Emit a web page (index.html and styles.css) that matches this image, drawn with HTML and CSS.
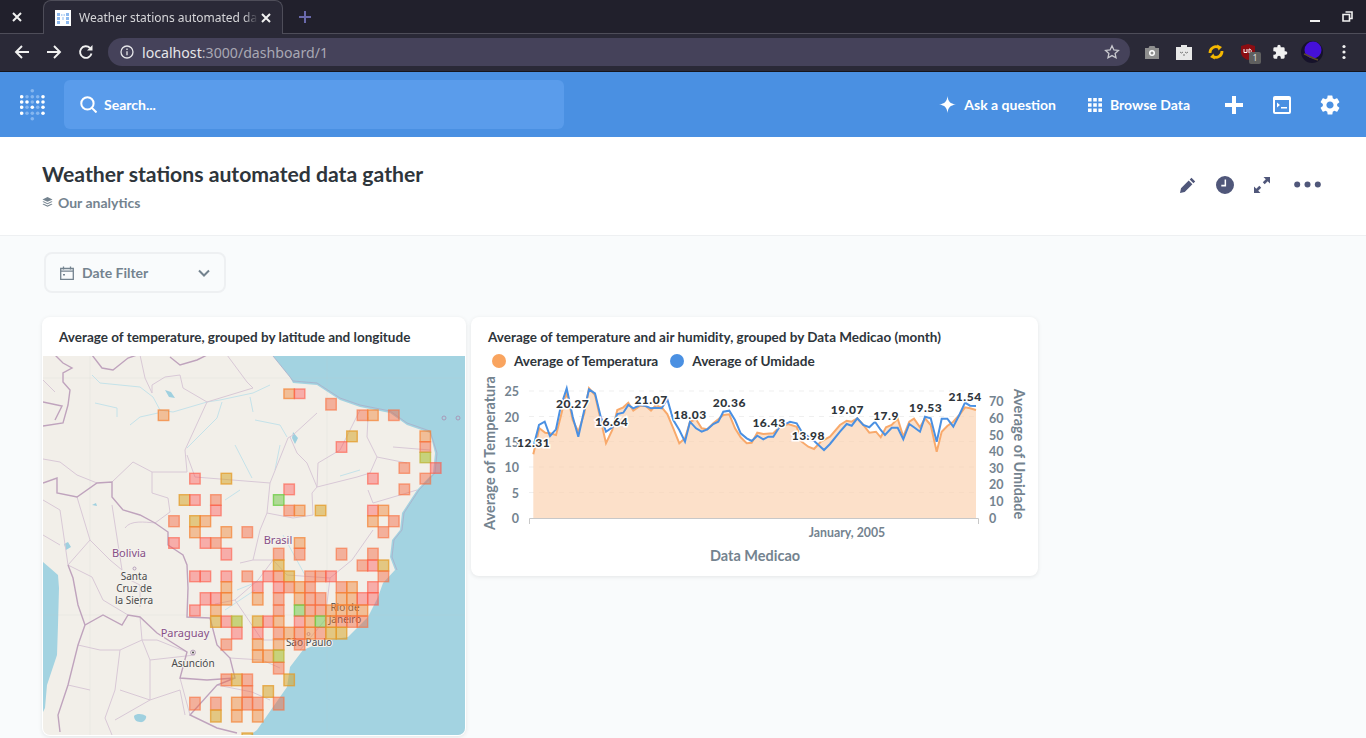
FILE: index.html
```html
<!DOCTYPE html>
<html lang="en">
<head>
    <meta charset="UTF-8">
    <meta name="viewport" content="width=device-width, initial-scale=1.0">
    <title>Weather stations automated data gather</title>
    <link rel="stylesheet" href="styles.css">
</head>
<body>

<!-- browser chrome -->
<div class="tab-strip">
    <svg class="tab-x first" viewBox="0 0 12 12"><path d="M2 2l8 8M10 2l-8 8"/></svg>
    <div class="tab">
        <svg class="favicon" viewBox="0 0 16 16">
            <rect width="16" height="16" fill="#fff"/>
            <path d="M2 3h3v3H2zM2 7h3v3H2zM2 11h3v3H2zM11 3h3v3h-3zM11 7h3v3h-3zM11 11h3v3h-3z" fill="#8db9ee"/>
            <path d="M6 4h1.5v2H6zM8.5 4H10v2H8.5zM7.2 7h1.6v3H7.2z" fill="#b9d4f4"/>
        </svg>
        <span class="tab-title">Weather stations automated da</span>
        <svg class="tab-x" viewBox="0 0 12 12"><path d="M2 2l8 8M10 2l-8 8"/></svg>
    </div>
    <svg class="new-tab" viewBox="0 0 12 12"><path d="M6 0v12M0 6h12"/></svg>
    <div class="window-btns">
        <span class="win-min"></span>
        <svg class="win-restore" viewBox="0 0 11 11"><path d="M3.500 1h6.500v6.500H8M1 3.500h6.500V10H1z"/></svg>
    </div>
</div>

<div class="toolbar">
    <svg class="tool-btn" viewBox="0 0 16 16"><path d="M15 8H2M8 2L2 8l6 6"/></svg>
    <svg class="tool-btn" viewBox="0 0 16 16"><path d="M1 8h13M8 2l6 6-6 6"/></svg>
    <svg class="tool-btn" viewBox="0 0 16 16"><path d="M13.500 9.500A5.800 5.800 0 1 1 12 4"/><path class="solid" d="M14.500 1v5.500H9z"/></svg>
    <div class="url-bar">
        <svg class="url-info" viewBox="0 0 14 14"><circle cx="7" cy="7" r="6"/><path d="M7 6.200v4M7 3.500v1.400"/></svg>
        <span class="url-text">localhost<span class="url-dim">:3000/dashboard/1</span></span>
        <svg class="url-star" viewBox="0 0 16 16"><path d="M8 1.800l1.900 4.100 4.500.5-3.300 3 .9 4.400L8 11.600l-4 2.200.9-4.400-3.300-3 4.500-.5z"/></svg>
    </div>
    <div class="extensions">
        <svg class="ext" viewBox="0 0 16 16"><path fill="#8e8e8e" d="M1 4h3.500l1-2h5l1 2H15v11H1z"/><circle cx="8" cy="9" r="3" fill="#fff"/><circle cx="8" cy="9" r="1.500" fill="#8e8e8e"/></svg>
        <svg class="ext" viewBox="0 0 16 16"><path fill="#e8e8e8" d="M0 3h5V1h6v2h5v13H0z"/><path d="M4 8l1.500 1L7 8M9 8l1.500 1L12 8M7 11h2" stroke="#777" fill="none"/></svg>
        <svg class="ext" viewBox="0 0 16 16"><g fill="none" stroke="#f5b800" stroke-width="2.800"><path d="M2 9a6 6 0 0 1 9-5.500"/><path d="M14 7a6 6 0 0 1-9 5.500"/></g><path fill="#f5b800" d="M9 .5l5 2.500-3.500 3.500zM7 15.500L2 13l3.500-3.500z"/></svg>
        <div class="ublock">
            <svg class="ext" viewBox="0 0 16 16"><path fill="#8b0d12" d="M8 0l7 2v6c0 4-3 6.500-7 8-4-1.500-7-4-7-8V2z"/><path d="M4 5v3.500h3V5M9 5v4M9 5c3 0 3 4 0 4" fill="none" stroke="#fff"/></svg>
            <span class="ext-badge">1</span>
        </div>
        <svg class="ext" viewBox="0 0 24 24"><path fill="#f1f1f1" d="M20.500 11H19V7a2 2 0 0 0-2-2h-4V3.500a2.500 2.500 0 0 0-5 0V5H4a2 2 0 0 0-2 2v3.800h1.500a2.700 2.700 0 0 1 0 5.400H2V20a2 2 0 0 0 2 2h3.800v-1.500a2.700 2.700 0 0 1 5.400 0V22H17a2 2 0 0 0 2-2v-4h1.500a2.500 2.500 0 0 0 0-5z"/></svg>
        <svg class="ext avatar" viewBox="0 0 22 22"><circle cx="11" cy="11" r="11" fill="#16122a"/><circle cx="12" cy="9" r="8.500" fill="#4510d8"/><path d="M3 13c4 1 7 4 14 6" stroke="#5c4a2a" stroke-width="1.500" fill="none"/></svg>
        <svg class="ext dots" viewBox="0 0 4 16"><circle cx="2" cy="2.500" r="1.600"/><circle cx="2" cy="8" r="1.600"/><circle cx="2" cy="13.500" r="1.600"/></svg>
    </div>
</div>

<!-- app nav -->
<nav class="navbar">
    <svg class="logo" viewBox="20 88 25 33">
        <g fill="#fff">
            <circle cx="21.700" cy="96.700" r="1.800"/><circle cx="21.700" cy="102" r="1.800"/><circle cx="21.700" cy="107.300" r="1.800"/><circle cx="21.700" cy="113.300" r="1.800"/>
            <circle cx="43" cy="96.700" r="1.800"/><circle cx="43" cy="102" r="1.800"/><circle cx="43" cy="107.300" r="1.800"/><circle cx="43" cy="113.300" r="1.800"/>
            <circle cx="27" cy="102" r="1.800"/><circle cx="37.700" cy="102" r="1.800"/><circle cx="32.300" cy="107.300" r="1.800"/>
        </g>
        <g fill="#85b6ef">
            <circle cx="32.300" cy="90.700" r="1.800"/><circle cx="32.300" cy="96.700" r="1.800"/><circle cx="32.300" cy="102" r="1.800"/><circle cx="32.300" cy="113.300" r="1.800"/><circle cx="32.300" cy="118.700" r="1.800"/>
            <circle cx="27" cy="96.700" r="1.800"/><circle cx="37.700" cy="96.700" r="1.800"/><circle cx="27" cy="107.300" r="1.800"/><circle cx="37.700" cy="107.300" r="1.800"/><circle cx="27" cy="113.300" r="1.800"/><circle cx="37.700" cy="113.300" r="1.800"/>
        </g>
    </svg>
    <div class="search-box">
        <svg class="search-icon" viewBox="0 0 16 16"><circle cx="7" cy="7" r="5.800"/><path d="M11.200 11.200L15.500 15.500"/></svg>
        <span>Search...</span>
    </div>
    <div class="nav-links">
        <a class="nav-link">
            <svg class="nav-small" viewBox="0 0 16 16"><path d="M8 0c.5 5 2.500 7.300 8 8-5.500.7-7.500 3-8 8-.5-5-2.500-7.300-8-8 5.500-.7 7.500-3 8-8z"/></svg>
            Ask a question
        </a>
        <a class="nav-link">
            <svg class="nav-small grid-icon" viewBox="0 0 14 14"><path d="M0 0h3.600v3.600H0zM5.200 0h3.600v3.600H5.200zM10.400 0H14v3.600h-3.600zM0 5.200h3.600v3.600H0zM5.200 5.200h3.600v3.600H5.200zM10.400 5.200H14v3.600h-3.600zM0 10.400h3.600V14H0zM5.200 10.400h3.600V14H5.200zM10.400 10.400H14V14h-3.600z"/></svg>
            Browse Data
        </a>
        <div class="nav-icons">
            <svg class="nav-icon" viewBox="0 0 18 18"><path d="M7 0h4v7h7v4h-7v7H7v-7H0V7h7z"/></svg>
            <svg class="nav-icon" viewBox="0 0 18 18"><path fill-rule="evenodd" d="M2 0h14a2 2 0 0 1 2 2v14a2 2 0 0 1-2 2H2a2 2 0 0 1-2-2V2a2 2 0 0 1 2-2zm0 4v12h14V4zM4 6.500l3 2.500-3 2.500zM8 11h6v1.500H8z"/></svg>
            <svg class="nav-icon gear" viewBox="0 0 24 24"><path fill-rule="evenodd" d="M19.140 12.940c.04-.3.06-.61.06-.94 0-.32-.02-.64-.07-.94l2.030-1.580a.49.49 0 0 0 .12-.61l-1.920-3.320a.488.488 0 0 0-.59-.22l-2.390.96c-.5-.38-1.030-.7-1.620-.94l-.36-2.540a.484.484 0 0 0-.48-.41h-3.840c-.24 0-.43.17-.47.41l-.36 2.540c-.59.24-1.130.57-1.620.94l-2.390-.96c-.22-.08-.47 0-.59.22L2.740 8.870c-.12.21-.08.47.12.61l2.030 1.580c-.05.3-.09.63-.09.94s.02.64.07.94l-2.030 1.580a.49.49 0 0 0-.12.61l1.920 3.320c.12.22.37.29.59.22l2.390-.96c.5.38 1.030.7 1.620.94l.36 2.540c.05.24.24.41.48.41h3.840c.24 0 .44-.17.47-.41l.36-2.540c.59-.24 1.130-.56 1.620-.94l2.390.96c.22.08.47 0 .59-.22l1.920-3.320c.12-.22.07-.47-.12-.61l-2.010-1.580zM12 15.600c-1.980 0-3.600-1.620-3.600-3.600s1.620-3.600 3.600-3.600 3.600 1.620 3.600 3.600-1.620 3.600-3.600 3.600z"/></svg>
        </div>
    </div>
</nav>

<!-- dashboard header -->
<header class="dash-header">
    <div>
        <h1 class="dash-title">Weather stations automated data gather</h1>
        <div class="dash-collection">
            <svg class="stack-icon" viewBox="0 0 12 12"><path d="M6 0l5.500 2.600L6 5.200.5 2.600zM1.800 4.700L6 6.700l4.200-2 1.300.6L6 7.900.5 5.300zM1.800 7.300L6 9.300l4.200-2 1.300.7L6 10.600.5 8z"/></svg>
            Our analytics
        </div>
    </div>
    <div class="dash-actions">
        <svg class="action-icon" viewBox="0 0 16 16"><path d="M11.500.800l3.700 3.700-1.800 1.800-3.700-3.700zM8.700 3.600l3.700 3.700-7.700 7.700-4.700 1 1-4.700z"/></svg>
        <svg class="action-icon clock" viewBox="0 0 18 18"><path fill-rule="evenodd" d="M9 0a9 9 0 1 1 0 18A9 9 0 0 1 9 0zm1.100 3.500H8.600v5.300H5.300v1.600h4.800z"/></svg>
        <svg class="action-icon expand" viewBox="0 0 16 16"><path d="M9.500 0H16v6.500l-2.300-2.300-3 3-1.900-1.900 3-3zM6.500 16H0V9.500l2.300 2.300 3-3 1.900 1.900-3 3z"/></svg>
        <svg class="action-icon more" viewBox="0 0 27 7"><circle cx="3.200" cy="3.500" r="3"/><circle cx="13.500" cy="3.500" r="3"/><circle cx="23.800" cy="3.500" r="3"/></svg>
    </div>
</header>

<main class="dash-body">
    <div class="date-filter">
        <svg class="cal-icon" viewBox="0 0 14 14"><path d="M.7 2.500h12.600v10.800H.7zM.7 5.200h12.600"/><path d="M3.500.5v3M10.500.5v3"/><path class="solid" d="M3 8h2v1.600H3z"/></svg>
        <span class="filter-label">Date Filter</span>
        <svg class="chev-icon" viewBox="0 0 12 8"><path d="M1 1.500l5 5 5-5"/></svg>
    </div>

    <div class="cards">
        <section class="card card-map">
            <h2 class="card-title">Average of temperature, grouped by latitude and longitude</h2>
            <svg class="map" viewBox="43 356 422 379">
                <rect x="43" y="356" width="422" height="379" class="land"/>
                <path class="sea" d="M273 356L290 377 293 383 317 385 340 400 360 407 390 413 407 425 430 433 435 453 433 473 417 490 402 513 400 530 392 540 390 557 395 570 383 583 378 597 368 617 348 637 327 640 303 650 290 667 287 687 273 707 257 730 250 735H465V356z"/>
                <path class="sea" d="M43 562L50 568 58 575 59 588 58 625 57 655 47 685 45 708 43 712z"/>
                <path class="coast" d="M273 356L290 377 293 381 317 383 340 398 360 405 390 411 407 423 430 431 437 453 435 473 419 490 404 513 402 530 394 540 392 557 397 570"/>
                <path class="seam" d="M90 356V735M43 378H465M327 356V735M43 615H465"/>
                <path class="river" d="M92 375L100 383 140 387 153 397 160 410 173 412 207 402 220 400 253 393 270 385M130 425L140 417 158 413M95 403L117 408 117 417M222 402L217 418 187 448M250 397L253 412M255 420L280 425 287 437M235 445L252 478M280 445L275 470M225 500L240 490M283 535L305 575M237 590L262 580M225 610L255 590M340 476L360 470"/>
                <path class="lake" d="M165 390l6 2 4 6-6-1zM64 544l4-2 3 5-5 3zM134 716c3-3 9-2 12 0 1 3-3 7-6 6-4 0-6-3-6-6zM92 505l4-2 1 3zM293 432l5 6-3 6-3-6z"/>
                <path class="state" d="M140 355L145 378 152 393 152 385 165 377 180 375 183 388 207 402M227 355L247 382 253 388 207 402M207 402L185 450 187 472 152 472 133 462 112 482M43 459L60 462 77 475 97 483M152 472L152 493 168 498 170 512 155 523M187 455L195 477 270 483 288 438 293 435 317 413M270 483L267 513 293 518 313 515 312 493 317 487 307 463 297 453 290 437M317 487L318 463 340 450 360 410M368 417L367 437 377 457 407 463M377 457L370 473 357 477 333 483 317 487M393 447L430 450M368 490L373 503 417 490M240 563L253 560 273 560 287 575 330 578 352 560 373 530M273 560L258 580 235 600 215 604M330 578L325 620 300 650M253 560L260 530 267 513M235 600L262 640 300 640M230 658L262 660 280 668M217 685L252 692 270 700M120 575L140 585 140 607M68 565L92 577 103 600 128 615M140 617L142 640 120 650 100 650 78 645M142 640L157 640 187 652M142 640L150 660 195 655M120 650L115 690 105 718 112 735M150 660L150 700 120 690M150 700L115 720M43 500L60 510 68 565 90 540 110 560 122 570 112 505M90 540L77 497M180 678L190 715M125 528C130 520 145 522 155 523M43 535L60 545M150 700L180 690 185 715M90 690L68 685M43 380L55 392"/>
                <path class="border" d="M55 355L63 363 72 368 63 373 63 382 70 390 68 405 63 423 43 426M43 402L62 406 55 420M92 355L102 368 113 370 128 358 137 355M170 357L180 365 197 360 207 355M43 483L57 478 57 493 77 497 97 483 112 482 112 497 123 510 140 515 155 523 168 532 168 545 183 555 187 565 188 588 187 617 210 618 217 645 230 658 235 678 217 685 190 715 217 728 237 733M68 565L73 578 78 605 85 625 103 615 122 625 128 615 140 617 157 633 187 652 180 678 207 680 235 678M85 625L78 645 68 685 58 715 60 732"/>
                <circle class="island" cx="444" cy="418" r="2"/>
                <circle class="island" cx="458" cy="418" r="2"/>
                <text class="place country" x="129" y="557">Bolivia</text>
                <circle class="island" cx="134.500" cy="568.500" r="1.500"/>
                <text class="place" x="134" y="580">Santa</text>
                <text class="place" x="134" y="592">Cruz de</text>
                <text class="place" x="134" y="604">la Sierra</text>
                <text class="place country" x="185" y="637">Paraguay</text>
                <circle class="island" cx="193" cy="652.500" r="2.400"/>
                <circle class="city-dot" cx="193" cy="652.500" r="1"/>
                <text class="place" x="193" y="667">Asunción</text>
                <text class="place country" x="278" y="544">Brasil</text>
                <text class="place" x="345" y="611">Rio de</text>
                <text class="place" x="345" y="623">Janeiro</text>
                <circle class="island" cx="308.500" cy="634" r="1.500"/>
                <text class="place" x="309" y="646">São Paulo</text>
                <g id="cells"></g>
            </svg>
        </section>

        <section class="card card-chart">
            <h2 class="card-title">Average of temperature and air humidity, grouped by Data Medicao (month)</h2>
            <div class="legend">
                <span class="legend-item"><i class="legend-dot dot-temp"></i>Average of Temperatura</span>
                <span class="legend-item"><i class="legend-dot dot-hum"></i>Average of Umidade</span>
            </div>
            <svg class="chart" viewBox="471 372 567 204">
                <path class="grid-line" d="M529 391H979M529 416.500H979M529 441.500H979M529 467H979M529 492.500H979"/>
                <polygon class="area" points="533.300,518 533.300,454.300 539.300,428.300 545.300,432.700 550,433.300 556,435 560.700,416.700 566.700,391.700 572.700,420 578.300,431.700 584.300,413.300 589,388.300 595,395 600.700,420 606,443.300 612.300,430 617.300,410 623.300,407.300 628.300,402.700 633.300,410.700 640,406 645.700,406 651,410.700 656,405 661.700,407.300 667.300,414 673.300,428.300 679.300,443.300 685,438.300 690,421.700 696,419.300 701.700,428.300 707.300,429.300 713.300,423.300 718.300,419.300 723.300,415 729.300,414.300 735,428.300 740.700,437.300 746.700,443.300 751.700,442.700 757.300,432.700 763.300,434 773.300,433.300 779.300,427.300 788.300,424 796.700,426.700 801.700,441.700 808.300,446.700 814,449 820.700,441.700 830,436.700 840,425 846.700,420.700 851.700,421.700 857.300,418.300 863.300,425 869.300,432.700 876,431.700 880.700,437.300 886,427.300 891.700,425 897.700,418.700 903.300,436.700 909.300,421.700 914,418.700 920,427.300 925,418.300 930.700,425 936.700,451.700 941.700,431.700 947.300,426 953.300,421.700 959.300,415 965,407.300 970,408.300 976,410 976,518"/>
                <polyline class="line-temp" points="533.300,454.300 539.300,428.300 545.300,432.700 550,433.300 556,435 560.700,416.700 566.700,391.700 572.700,420 578.300,431.700 584.300,413.300 589,388.300 595,395 600.700,420 606,443.300 612.300,430 617.300,410 623.300,407.300 628.300,402.700 633.300,410.700 640,406 645.700,406 651,410.700 656,405 661.700,407.300 667.300,414 673.300,428.300 679.300,443.300 685,438.300 690,421.700 696,419.300 701.700,428.300 707.300,429.300 713.300,423.300 718.300,419.300 723.300,415 729.300,414.300 735,428.300 740.700,437.300 746.700,443.300 751.700,442.700 757.300,432.700 763.300,434 773.300,433.300 779.300,427.300 788.300,424 796.700,426.700 801.700,441.700 808.300,446.700 814,449 820.700,441.700 830,436.700 840,425 846.700,420.700 851.700,421.700 857.300,418.300 863.300,425 869.300,432.700 876,431.700 880.700,437.300 886,427.300 891.700,425 897.700,418.700 903.300,436.700 909.300,421.700 914,418.700 920,427.300 925,418.300 930.700,425 936.700,451.700 941.700,431.700 947.300,426 953.300,421.700 959.300,415 965,407.300 970,408.300 976,410"/>
                <polyline class="line-hum" points="533.300,447 539,425 544.700,421.700 550,436 556,429.300 560.700,406.700 566.700,388.300 572.700,416.700 578.300,436.700 584.300,410 589,389.300 595,393.300 600.700,416.700 606,431.700 612.300,427.300 617.300,414 623.300,412.700 628.300,405 633.300,408.300 640,405 645.700,406 651,408.300 656,407.700 661.700,408.300 667.300,399.300 673.300,420 679.300,430 685,441.700 690,421.700 696,428.300 701.700,431.700 707.300,429.300 713.300,424 718.300,421.700 723.300,411.700 729.300,410.700 735,420 740.700,433.300 746.700,438.300 751.700,441 757.300,435.700 763.300,439.300 768.300,436.700 773.300,436.700 779.300,427.300 790,421.700 796.700,423.300 801.700,431.700 815,441.700 824,450 830,444 840,431.700 846.700,424 851.700,425.700 857.300,418.300 863.300,425 869.300,427.300 875,421.700 880.700,430 885,435 891.700,427.700 897.700,427.700 903.300,439.300 909.300,424 914,427.300 920,431.700 925,416.700 930.700,418.300 936.700,441.700 941.700,418.700 947.300,418.700 953.300,426.700 959.300,415 965,402.700 970,405.700 976,406"/>
                <path class="axis-line" d="M529.500 524V518.500H978.500V524"/>
                <g class="tick-left">
                    <text x="519" y="396">25</text>
                    <text x="519" y="421.500">20</text>
                    <text x="519" y="446.500">15</text>
                    <text x="519" y="472">10</text>
                    <text x="519" y="497.500">5</text>
                    <text x="519" y="523">0</text>
                </g>
                <g class="tick-right">
                    <text x="989" y="406">70</text>
                    <text x="989" y="423">60</text>
                    <text x="989" y="440">50</text>
                    <text x="989" y="456">40</text>
                    <text x="989" y="473">30</text>
                    <text x="989" y="489">20</text>
                    <text x="989" y="506">10</text>
                    <text x="989" y="523">0</text>
                </g>
                <text class="tick-bottom" x="847" y="537">January, 2005</text>
                <text class="axis-title" x="755" y="561">Data Medicao</text>
                <text class="axis-title" transform="translate(495 453) rotate(-90)">Average of Temperatura</text>
                <text class="axis-title" transform="translate(1014 454) rotate(90)">Average of Umidade</text>
                <g class="point-label">
                    <text x="533.700" y="447">12.31</text>
                    <text x="572.700" y="407.500">20.27</text>
                    <text x="611.700" y="426">16.64</text>
                    <text x="651" y="403.500">21.07</text>
                    <text x="690" y="418.500">18.03</text>
                    <text x="729.300" y="406.500">20.36</text>
                    <text x="769" y="426.500">16.43</text>
                    <text x="808.300" y="439.500">13.98</text>
                    <text x="847.300" y="413.500">19.07</text>
                    <text x="886" y="419.500">17.9</text>
                    <text x="925.700" y="411.500">19.53</text>
                    <text x="965" y="400.500">21.54</text>
                </g>
            </svg>
        </section>
    </div>
</main>

<script src="map.js"></script>
</body>
</html>
```

FILE: styles.css
```css
* {
    box-sizing: border-box;
}

html, body {
    height: 738px;
    overflow: hidden;
}

body {
    margin: 0;
    font-family: Lato, "Open Sans", sans-serif;
    background-color: #f9fbfc;
    color: #2e353b;
}

/* browser chrome */
.tab-strip {
    display: flex;
    align-items: center;
    height: 34px;
    background-color: #21202c;
    border-bottom: 1px solid #4e4d59;
    font-family: "Noto Sans", sans-serif;
}

.tab-x {
    width: 12px;
    height: 12px;
    fill: none;
    stroke: #f1f1f1;
    stroke-width: 2;
    flex: none;
}

.tab-x.first {
    margin-left: 11px;
}

.tab {
    display: flex;
    align-items: center;
    width: 240px;
    height: 34px;
    margin-left: 20px;
    margin-bottom: -1px;
    padding: 0 10px 0 11px;
    background-color: #2a2937;
    border: 1px solid #4e4d59;
    border-bottom: 0;
    border-radius: 8px 8px 0 0;
}

.favicon {
    width: 16px;
    height: 16px;
    flex: none;
}

.tab-title {
    flex: 1;
    min-width: 0;
    margin-left: 8px;
    font-size: 12px;
    color: #d6d6d9;
    white-space: nowrap;
    overflow: hidden;
    -webkit-mask-image: linear-gradient(to right, #000 92%, transparent 100%);
    mask-image: linear-gradient(to right, #000 92%, transparent 100%);
}

.tab .tab-x {
    margin-left: 2px;
}

.new-tab {
    width: 12px;
    height: 12px;
    margin-left: 16px;
    fill: none;
    stroke: #6a69ab;
    stroke-width: 2;
}

.window-btns {
    display: flex;
    align-items: center;
    margin-left: auto;
    margin-right: 13px;
    gap: 22px;
}

.win-min {
    display: block;
    width: 10px;
    height: 2px;
    margin-top: 8px;
    background-color: #f1f1f1;
}

.win-restore {
    width: 11px;
    height: 11px;
    fill: none;
    stroke: #f1f1f1;
    stroke-width: 1.600;
}

.toolbar {
    display: flex;
    align-items: center;
    height: 38px;
    padding: 0 0 1px 14px;
    background-color: #2a2937;
    border-bottom: 1px solid #15151c;
    font-family: "Noto Sans", sans-serif;
}

.tool-btn {
    width: 16px;
    height: 16px;
    margin-right: 16px;
    fill: none;
    stroke: #f1f1f1;
    stroke-width: 1.900;
    flex: none;
}

.tool-btn .solid {
    fill: #f1f1f1;
    stroke: none;
}

.url-bar {
    display: flex;
    align-items: center;
    width: 1022px;
    height: 28px;
    margin-left: -2px;
    padding: 0 10px 0 12px;
    background-color: #45425a;
    border-radius: 14px;
    flex: none;
}

.url-info {
    width: 14px;
    height: 14px;
    fill: none;
    stroke: #e6e6e9;
    stroke-width: 1.300;
}

.url-text {
    margin-left: 8px;
    font-size: 14.150px;
    color: #e6e6e9;
}

.url-dim {
    color: #a9a8b4;
}

.url-star {
    width: 16px;
    height: 16px;
    margin-left: auto;
    fill: none;
    stroke: #c9c9cf;
    stroke-width: 1.300;
}

.extensions {
    display: flex;
    align-items: center;
    margin-left: 14px;
    gap: 16px;
}

.ext {
    display: block;
    width: 16px;
    height: 16px;
}

.ublock {
    position: relative;
    width: 16px;
    height: 16px;
}

.ext-badge {
    position: absolute;
    top: 8px;
    left: 9px;
    width: 12px;
    height: 12px;
    background-color: #5f5f5f;
    border-radius: 2px;
    color: #ddd;
    font-size: 9px;
    line-height: 12px;
    text-align: center;
}

.avatar {
    width: 22px;
    height: 22px;
    margin: 0 -3px;
}

.dots {
    width: 4px;
    height: 16px;
    margin-left: 6px;
    fill: #f1f1f1;
}

/* app nav */
.navbar {
    display: flex;
    align-items: center;
    height: 65px;
    padding-right: 27px;
    background-color: #4a90e2;
    color: #fff;
}

.logo {
    width: 25px;
    height: 33px;
    margin-left: 20px;
    flex: none;
}

.search-box {
    display: flex;
    align-items: center;
    width: 500px;
    height: 49px;
    margin-left: 19px;
    padding-left: 16px;
    background-color: #5a9ceb;
    border-radius: 6px;
    font-size: 14px;
    font-weight: 700;
}

.search-icon {
    width: 17px;
    height: 17px;
    margin-right: 7px;
    fill: none;
    stroke: #fff;
    stroke-width: 1.900;
}

.nav-links {
    display: flex;
    align-items: center;
    margin-left: auto;
}

.nav-link {
    display: flex;
    align-items: center;
    margin-right: 32px;
    font-size: 14px;
    font-weight: 700;
}

.nav-link:last-of-type {
    margin-right: 31px;
}

.nav-small {
    width: 17px;
    height: 17px;
    margin-right: 8px;
    fill: #fff;
}

.grid-icon {
    width: 14px;
    height: 14px;
}

.nav-icons {
    display: flex;
    align-items: center;
    gap: 30px;
    margin-left: 4px;
}

.nav-icon {
    width: 18px;
    height: 18px;
    fill: #fff;
}

.nav-icon.gear {
    width: 24px;
    height: 24px;
    margin: -3px;
}

/* dashboard header */
.dash-header {
    display: flex;
    justify-content: space-between;
    align-items: center;
    height: 99px;
    padding: 0 45px 1px 42px;
    background-color: #fff;
    border-bottom: 1px solid #eef0f2;
}

.dash-title {
    margin: 0;
    font-size: 21.200px;
    line-height: 28px;
    font-weight: 700;
    color: #2e353b;
}

.dash-collection {
    display: flex;
    align-items: center;
    margin-top: 6px;
    font-size: 14px;
    line-height: 18px;
    font-weight: 700;
    color: #74838f;
}

.stack-icon {
    width: 11px;
    height: 11px;
    margin-right: 5px;
    fill: #74838f;
}

.dash-actions {
    display: flex;
    align-items: center;
    margin-bottom: 2px;
}

.action-icon {
    width: 16px;
    height: 16px;
    fill: #50577a;
}

.clock {
    width: 18px;
    height: 18px;
    margin-left: 20px;
}

.expand {
    margin-left: 20px;
}

.more {
    width: 27px;
    height: 7px;
    margin-left: 24px;
}

/* dashboard body */
.dash-body {
    padding: 16px 0 0 42px;
}

.date-filter {
    display: flex;
    align-items: center;
    width: 182px;
    height: 41px;
    margin-left: 2px;
    padding: 0 14px;
    border: 2px solid #eef0f2;
    border-radius: 8px;
}

.cal-icon {
    width: 14px;
    height: 14px;
    fill: none;
    stroke: #74838f;
    stroke-width: 1.300;
}

.cal-icon .solid {
    fill: #74838f;
    stroke: none;
}

.filter-label {
    margin-left: 8px;
    font-size: 14px;
    font-weight: 700;
    color: #74838f;
}

.chev-icon {
    width: 12px;
    height: 8px;
    margin-left: auto;
    fill: none;
    stroke: #74838f;
    stroke-width: 2;
}

.cards {
    display: flex;
    align-items: flex-start;
    gap: 5px;
    margin-top: 24px;
}

.card {
    background-color: #fff;
    border-radius: 8px;
    box-shadow: 0 1px 4px rgba(0, 0, 0, 0.09);
    overflow: hidden;
}

.card-map {
    width: 424px;
    height: 419px;
}

.card-chart {
    width: 567px;
    height: 259px;
}

.card-title {
    margin: 0;
    font-size: 13.500px;
    line-height: 16px;
    font-weight: 700;
    color: #2e353b;
}

.card-map .card-title {
    padding: 12px 17px 11px;
}

.card-chart .card-title {
    padding: 12px 17px 0;
}

/* map */
.map {
    display: block;
    width: 422px;
    height: 379px;
    margin: 0 1px;
    border-radius: 0 0 7px 7px;
}

.land {
    fill: #f2efe9;
}

.sea {
    fill: #a3d3e1;
}

.coast {
    fill: none;
    stroke: #a9adc9;
    stroke-width: 0.800;
}

.seam {
    fill: none;
    stroke: rgba(200, 200, 200, 0.18);
    stroke-width: 0.800;
}

.river {
    fill: none;
    stroke: #c4e2e9;
    stroke-width: 1;
}

.lake {
    fill: #9fd0df;
}

.state {
    fill: none;
    stroke: #d8c8d6;
    stroke-width: 1;
}

.border {
    fill: none;
    stroke: #bfa3bd;
    stroke-width: 1.400;
}

.island {
    fill: none;
    stroke: #a78bb0;
    stroke-width: 0.800;
}

.city-dot {
    fill: #444;
}

.place {
    font-family: "Noto Sans", sans-serif;
    font-size: 10px;
    text-anchor: middle;
    fill: #4a4a4a;
    stroke: #f4f2ee;
    stroke-width: 2px;
    paint-order: stroke;
}

.country {
    font-size: 11px;
    fill: #874f87;
}

.cell {
    stroke-width: 1.400;
}

.cell-p {
    fill: rgba(255, 80, 80, 0.42);
    stroke: rgba(255, 90, 70, 0.6);
}

.cell-s {
    fill: rgba(245, 100, 60, 0.45);
    stroke: rgba(250, 110, 60, 0.6);
}

.cell-o {
    fill: rgba(240, 130, 50, 0.45);
    stroke: rgba(245, 130, 50, 0.7);
}

.cell-y {
    fill: rgba(215, 165, 45, 0.55);
    stroke: rgba(228, 155, 40, 0.75);
}

.cell-l {
    fill: rgba(170, 190, 50, 0.6);
    stroke: rgba(190, 180, 50, 0.7);
}

.cell-g {
    fill: rgba(120, 200, 80, 0.55);
    stroke: rgba(110, 205, 70, 0.8);
}

/* chart */
.legend {
    display: flex;
    gap: 12px;
    padding: 7px 0 0 21px;
    font-size: 13.600px;
    line-height: 18px;
    font-weight: 700;
    color: #2e353b;
}

.legend-item {
    display: flex;
    align-items: center;
}

.legend-dot {
    width: 14px;
    height: 14px;
    margin-right: 8px;
    border-radius: 50%;
}

.dot-temp {
    background-color: #f9a45f;
}

.dot-hum {
    background-color: #4a90e2;
}

.chart {
    display: block;
    width: 567px;
    height: 204px;
    margin-top: 2px;
}

.grid-line {
    fill: none;
    stroke: #efefef;
    stroke-dasharray: 5 5;
}

.area {
    fill: #fbd0ac;
    fill-opacity: 0.65;
}

.line-temp {
    fill: none;
    stroke: #f8a96b;
    stroke-width: 2;
}

.line-hum {
    fill: none;
    stroke: #4a90e2;
    stroke-width: 2;
}

.axis-line {
    fill: none;
    stroke: #c8c8c8;
}

.tick-left text,
.tick-right text,
.tick-bottom {
    font-size: 12.500px;
    font-weight: 700;
    fill: #74838f;
}

.tick-left text {
    text-anchor: end;
}

.tick-bottom {
    font-size: 12.300px;
    text-anchor: middle;
}

.axis-title {
    font-size: 14.500px;
    font-weight: 700;
    fill: #74838f;
    text-anchor: middle;
}

.point-label text {
    font-size: 12px;
    font-weight: 900;
    letter-spacing: 0.5px;
    text-anchor: middle;
    fill: #2e353b;
    stroke: #fff;
    stroke-width: 3px;
    paint-order: stroke;
}
```

FILE: map.js
```js
// Grid of weather stations on the map: [top of row, "column+colour ..."]
const rows = [
    [389, '9o 10p'],
    [398.5, '13s'],
    [410, '-3o 16s 17o 19s'],
    [420.5, ''],
    [431, '15y 22o'],
    [441.7, '14p 22s'],
    [452.3, '22l'],
    [462.7, '20s 23p'],
    [473.3, '0p 3y 17p 22s'],
    [484, '9p 20s'],
    [494.7, '-1y 0p 2s 8g'],
    [505.3, '2p 9s 10o 12y 17p 18o'],
    [515.7, '-2s 0y 1o 17o 19s'],
    [526.7, '0o 3o 5s 18s'],
    [537.7, '-2p 1p 2s 10o'],
    [548.3, '3p 8s 10s 14s 17s'],
    [560, '8y 16s 17p 18y'],
    [571, '0p 1p 3p 5s 7p 8s 9y 11s 12s 13p 18s'],
    [581.7, '3o 6p 8p 9s 10o 11s 14s 15o 17p'],
    [592.7, '1p 2p 3o 6o 8s 10o 11s 12s 14o 15o 16p 17p'],
    [605, '0p 2o 8s 10g 11s 12s 13o 14o 15o 16o'],
    [616, '2y 3p 4l 6y 7p 8o 10p 11o 12g 13o 14s 15s 16s'],
    [627.3, '4p 6p 8s 9o 10s 11o 12s 13y 14y'],
    [639, '3s 6o 8o 10s'],
    [650, '6o 7o 8l'],
    [662.3, '8s'],
    [674, '3s 4y 5s 9y'],
    [685.7, '5s 7y'],
    [697.3, '0s 2s 4o 5s 6s 8s'],
    [710, '2y 4o 6o'],
    [722, ''],
    [733, '5y']
];

const colLeft = 189.7;
const colWidth = 10.47;
const cells = document.getElementById('cells');

rows.forEach(function (row, i) {
    if (!row[1]) return;
    const next = rows[i + 1] ? rows[i + 1][0] : row[0] + 11.5;

    row[1].split(' ').forEach(function (cell) {
        const col = parseInt(cell, 10);
        const rect = document.createElementNS('http://www.w3.org/2000/svg', 'rect');
        rect.setAttribute('x', colLeft + col * colWidth);
        rect.setAttribute('y', row[0]);
        rect.setAttribute('width', colWidth);
        rect.setAttribute('height', next - row[0]);
        rect.setAttribute('class', 'cell cell-' + cell.slice(-1));
        cells.appendChild(rect);
    });
});
```
